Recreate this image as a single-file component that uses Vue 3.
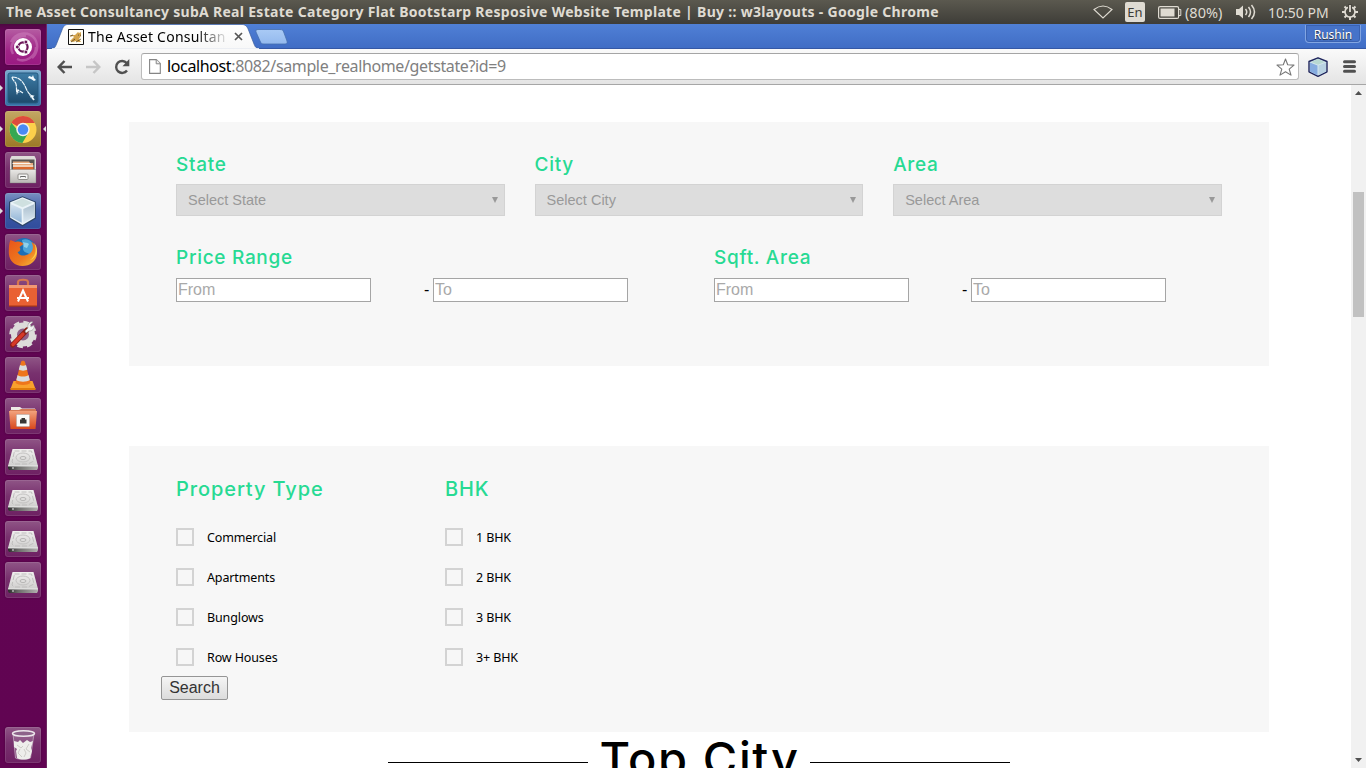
<script setup>
import { ref } from 'vue'

const launcher = [
  { icon: 'ubuntu', tint: 'magenta' },
  { icon: 'mysql', tint: 'blue', left: true },
  { icon: 'chrome', tint: 'gold', left: true, right: true },
  { icon: 'files', tint: 'plain' },
  { icon: 'cube', tint: 'royal', left: true },
  { icon: 'firefox', tint: 'plain' },
  { icon: 'software', tint: 'plain' },
  { icon: 'settings', tint: 'plain' },
  { icon: 'vlc', tint: 'plain' },
  { icon: 'network', tint: 'plain' },
  { icon: 'disk', tint: 'plain' },
  { icon: 'disk', tint: 'plain' },
  { icon: 'disk', tint: 'plain' },
  { icon: 'disk', tint: 'plain' }
]
const places = ref([
  { label: 'State', prompt: 'Select State' },
  { label: 'City', prompt: 'Select City' },
  { label: 'Area', prompt: 'Select Area' }
])
const ranges = [
  { label: 'Price Range', key: 'price' },
  { label: 'Sqft. Area', key: 'sqft' }
]
const filters = [
  { label: 'Property Type', key: 'type', options: ['Commercial', 'Apartments', 'Bunglows', 'Row Houses'] },
  { label: 'BHK', key: 'bhk', options: ['1 BHK', '2 BHK', '3 BHK', '3+ BHK'] }
]
</script>

<template>
  <div class="desktop">
    <svg class="defs" width="0" height="0">
      <defs>
        <linearGradient id="gSea" x1="0" y1="0" x2="0" y2="1"><stop offset="0" stop-color="#3d7ca6" /><stop offset="1" stop-color="#1d4a6c" /></linearGradient>
        <linearGradient id="gMetal" x1="0" y1="0" x2="0" y2="1"><stop offset="0" stop-color="#e9e8e6" /><stop offset="1" stop-color="#b9b7b4" /></linearGradient>
        <linearGradient id="gPlate" x1="0" y1="0" x2="0" y2="1"><stop offset="0" stop-color="#f1f0ef" /><stop offset="1" stop-color="#cfcecd" /></linearGradient>
        <linearGradient id="gRim" x1="0" y1="0" x2="1" y2="0"><stop offset="0" stop-color="#2b2b2b" /><stop offset=".35" stop-color="#6d6d6b" /><stop offset="1" stop-color="#b2b1af" /></linearGradient>
        <linearGradient id="gOrange" x1="0" y1="0" x2="0" y2="1"><stop offset="0" stop-color="#f3a27c" /><stop offset="1" stop-color="#d8481c" /></linearGradient>
        <linearGradient id="gFox" x1="0" y1="0" x2="1" y2="1"><stop offset="0" stop-color="#e8541a" /><stop offset=".6" stop-color="#ee7a1e" /><stop offset="1" stop-color="#f7c13c" /></linearGradient>
        <linearGradient id="gCubeL" x1="0" y1="0" x2="0" y2="1"><stop offset="0" stop-color="#d4e2ee" /><stop offset="1" stop-color="#8fb3d6" /></linearGradient>
        <linearGradient id="gCubeR" x1="0" y1="0" x2="0" y2="1"><stop offset="0" stop-color="#a9bdcc" /><stop offset="1" stop-color="#dce9f2" /></linearGradient>
        <linearGradient id="gTab" x1="0" y1="0" x2="0" y2="1"><stop offset="0" stop-color="#ffffff" /><stop offset="1" stop-color="#f8f8f8" /></linearGradient>
        <linearGradient id="gNew" x1="0" y1="0" x2="0" y2="1"><stop offset="0" stop-color="#a9caf5" /><stop offset="1" stop-color="#93b9ee" /></linearGradient>

        <symbol id="ubuntu" viewBox="0 0 36 36">
          <path d="M6 13c4-9 17-12 24-3 4 7 2 15-3 19M8 25c-5-9 3-19 13-18M12 30c8 4 19-2 19-12" fill="none" stroke="#d58bc6" stroke-width="2.5" opacity=".45" />
          <circle cx="18" cy="18" r="9" fill="#fff" />
          <circle cx="18" cy="18" r="4.6" fill="none" stroke="#6b1659" stroke-width="2.2" />
          <path d="M18 18h-6M18 18l3.500 6M18 18l3.500-6" stroke="#fff" stroke-width=".9" />
          <circle cx="18" cy="18" r="3" fill="#fff" />
          <g fill="#6b1659" stroke="#fff" stroke-width=".8"><circle cx="12.300" cy="18" r="1.900" /><circle cx="20.900" cy="13" r="1.900" /><circle cx="20.900" cy="23" r="1.900" /></g>
        </symbol>
        <symbol id="mysql" viewBox="0 0 36 36">
          <rect x="3" y="3" width="30" height="30" rx="2" fill="url(#gSea)" stroke="#265a80" />
          <path d="M7 7c6 0 10 3 13 9 2 5 4 9 8 10l-2 1 3 3M7 7c0 3 3 4 4 7 1 4 0 6 1 9l1-3 5 3" fill="none" stroke="#eef7fb" stroke-width="1.200" stroke-dasharray="5 .6" />
          <path d="m24 25 5 1-1 1 2 3-4-3zM11 20l4 3-3-1zM24 6l3 1 1-2 1 3 2 2-2 1-3-2-3-1z" fill="#f4fbff" />
        </symbol>
        <symbol id="chrome" viewBox="0 0 36 36">
          <circle cx="18" cy="18.500" r="13.500" fill="#fcd04b" />
          <path d="M18 18.500 6.300 11.800A13.500 13.500 0 0 1 29.800 12H18z" fill="#dd4b3e" />
          <path d="M18 18.500h-6L6.300 11.800A13.500 13.500 0 0 0 17.400 32l5.800-10z" fill="#35a853" />
          <circle cx="18" cy="18.500" r="6.700" fill="#f1f1f1" />
          <circle cx="18" cy="18.500" r="5.200" fill="#4a8af4" />
        </symbol>
        <symbol id="files" viewBox="0 0 36 36">
          <path d="M6.500 4h23L31 7v12H5V7z" fill="#dedcda" />
          <path d="M6.500 7.500h23V19h-23z" fill="#575451" />
          <path d="M8 9.500h16l1 1.500h3v8H8z" fill="#e6aa7e" />
          <path d="M7.500 11.500h18M8 14h20.500" stroke="#f9f6ef" stroke-width="1" />
          <path d="M8 15h20.500v3H8z" fill="#d9692d" />
          <path d="M5 17.500h26V31H5z" fill="url(#gMetal)" stroke="#777" stroke-width=".4" />
          <rect x="13" y="22" width="10" height="5.500" rx="1" fill="#f5f5f4" stroke="#8f8d8a" /><path d="M15.500 25.500v-1h5v1" fill="none" stroke="#666" />
        </symbol>
        <symbol id="cube" viewBox="0 0 36 36">
          <path d="m17.500 3.200 13.500 5.500v16.800l-13.500 8-13.500-8V8.700z" fill="#2c4568" />
          <path d="m17.500 4.200 12.300 5v15.500l-12.300 7.300-12.300-7.300V9.200z" fill="#eaf3f8" />
          <path d="m17.500 5.500 10 4.200-10 4.500-10-4.500z" fill="#cfe0e0" />
          <path d="m6 11.200 10.700 4.800v13.800L6 24z" fill="url(#gCubeL)" />
          <path d="m29 11.200-10.700 4.800v13.800L29 24z" fill="url(#gCubeR)" />
        </symbol>
        <symbol id="firefox" viewBox="0 0 36 36">
          <circle cx="19" cy="16.500" r="12.500" fill="#1d6fb5" />
          <path d="M17 6c4-2 9 0 11 4 2 5 0 9-3 11-2-3-8-2-7-8z" fill="#4da4d6" />
          <path d="M18 8c2 1 4 0 6 2l-2 4-3-1z" fill="#8fd0ea" />
          <path d="M5.500 6c1.500 1 3 1 5 2 4-1 6 0 8 2l-4 3c2 3 0 5-2 5 2 5 9 4 13 1 3-3 3-7 1-11 4 2 5.500 6 5.500 11C32 27 25 32 17.500 32 9 32 3.800 26 3.800 18.500 3.800 13 4 9 5.500 6z" fill="url(#gFox)" />
          <path d="M29 9c3 6 2 13-4 17 4-1 6.500-4 7-8 .3-4-1-7-3-9z" fill="#f9cf4a" />
        </symbol>
        <symbol id="software" viewBox="0 0 36 36">
          <path d="M13 12V7c0-3 10-3 10 0v5" fill="none" stroke="#d6764f" stroke-width="2.200" />
          <path d="M4 10h28v21H4z" fill="#e96133" /><path d="M4 10h28v3H4z" fill="#f19873" /><path d="M4 30.500h28v1.200H4z" fill="#a63715" />
          <path d="M13 26.500 18 15.500l5 11M12 23h12" fill="none" stroke="#fff" stroke-width="2" />
        </symbol>
        <symbol id="settings" viewBox="0 0 36 36">
          <circle cx="18" cy="18.500" r="9" fill="#8f6088" stroke="#dddcda" stroke-width="6" />
          <circle cx="18" cy="18.500" r="12" fill="none" stroke="#dddcda" stroke-width="3.500" stroke-dasharray="5.400 4.025" />
          <path d="M7.500 29 22 14" stroke="#8d1f15" stroke-width="5" stroke-linecap="round" />
          <path d="M8 28.500 18 18" stroke="#d63928" stroke-width="3.300" stroke-linecap="round" />
          <path d="m20 15 3-3c-1-4 2-7 5-6l-3 3 1 2 3-2c1 4-2 6-5 6l-3 2z" fill="#f2f2f2" stroke="#888" stroke-width=".5" />
        </symbol>
        <symbol id="vlc" viewBox="0 0 36 36">
          <path d="M8.500 24h19l3 8h-25z" fill="#f9a12d" /><path d="M5.500 31h25v2h-25z" fill="#e07c0c" />
          <path d="M16 5c.5-1.800 3.500-1.800 4 0l5.500 21c-3 2.500-12 2.500-15 0z" fill="#ee761c" />
          <path d="m15 8-1.200 4.500c2 1.500 6.500 1.500 8.500 0L21 8c-1.500 1-4.500 1-6 0zM12.600 18l-1.300 5c3 2.300 10.500 2.300 13.500 0l-1.300-5c-2.500 2-8.500 2-10.900 0z" fill="#d8dcdf" />
        </symbol>
        <symbol id="network" viewBox="0 0 36 36">
          <path d="M6 9h9l2 1.500h13V17H6z" fill="#eeeae6" /><path d="M5 12h9l2-1h15v4H5z" fill="#d47a55" />
          <path d="M4 13h28l-1.500 18h-25z" fill="url(#gOrange)" />
          <rect x="11.500" y="16.500" width="13" height="12" rx=".7" fill="#fafaf8" stroke="#aaa" stroke-width=".5" />
          <path d="M15 25.500v-4h1.500V20h3.500v1.500h1.500v4z" fill="#373634" />
        </symbol>
        <symbol id="disk" viewBox="0 0 36 36">
          <path d="M7.500 10h21L33 27H3z" fill="url(#gPlate)" />
          <path d="M9.500 12h17l2.500 10-6 3H9l-2-2z" fill="none" stroke="#bfbebd" stroke-width="1" stroke-dasharray="5 2" />
          <ellipse cx="18" cy="18.500" rx="7" ry="4.500" fill="none" stroke="#c3c2c1" /><ellipse cx="18" cy="19" rx="3" ry="1.500" fill="#e2e1e0" stroke="#b5b4b3" />
          <path d="M3 27h30v2l-1 2H4l-1-2z" fill="url(#gRim)" /><path d="M3 27h30" stroke="#f4f4f4" stroke-width=".8" /><path d="M7 28h2v2H7z" fill="#999" />
        </symbol>
        <symbol id="trash" viewBox="0 0 36 36">
          <path d="M8 6.500 10.500 31c2 1.500 13 1.500 15 0L29 6.500" fill="#c8b8c8" fill-opacity=".25" stroke="#cbb9c9" stroke-width=".7" />
          <ellipse cx="18.500" cy="6.500" rx="11" ry="2.800" fill="#8d638a" stroke="#ece6eb" stroke-width="1.500" />
          <path d="m9 14 4 1 2-2 3 3 4-3 3 2 3-1-2 7 1 3-2 7c-3 2-10 2-13 0l-1-7 1-2-3-2z" fill="#eeedeb" />
          <path d="m12 18 4 3 2-2m6-2-3 5 4 3m-10-3-2 4 4 4m2-8 2 4-2 4" fill="none" stroke="#c4c1be" stroke-width=".8" />
        </symbol>
      </defs>
    </svg>

    <header class="menubar">
      <span class="title">The Asset Consultancy subA Real Estate Category Flat Bootstarp Resposive Website Template | Buy :: w3layouts - Google Chrome</span>
      <div class="tray">
        <svg class="wifi" width="20" height="14" viewBox="0 0 20 14"><path d="M1 4.500Q10-2.500 19 4.500L10 13z" fill="none" stroke="#dfdbd2" stroke-width="1.100" /></svg>
        <span class="lang">En</span>
        <svg class="battery" width="24" height="13" viewBox="0 0 24 13"><rect x=".6" y=".6" width="20" height="11.800" rx="1.500" fill="none" stroke="#dfdbd2" stroke-width="1.200" /><path d="M2.500 2.500h14v8h-14z" fill="#dfdbd2" /><path d="M21 3.500h1.800v6H21" fill="none" stroke="#dfdbd2" /></svg>
        <span class="percent">(80%)</span>
        <svg class="sound" width="21" height="16" viewBox="0 0 21 16"><path d="M1 5h3l4-3.500v13L4 11H1z" fill="#dfdbd2" /><path d="M10.500 5q2.500 3 0 6M13.500 3q4 5 0 10M16.500 1q6 7 0 14" fill="none" stroke="#dfdbd2" stroke-width="1.500" /></svg>
        <span class="clock">10:50 PM</span>
        <svg class="gear" width="16" height="16" viewBox="0 0 16 16"><circle cx="8" cy="8" r="5" fill="none" stroke="#dfdbd2" stroke-width="1.700" /><path d="M8 13v3M3 8H0M13 8h3M4.500 4.500l-2-2M11.500 4.500l2-2M4.500 11.500l-2 2M11.500 11.500l2 2" stroke="#dfdbd2" stroke-width="2" /><path d="M8 0v8" stroke="#48463f" stroke-width="4" /><path d="M8 1v7" stroke="#dfdbd2" stroke-width="1.800" /></svg>
      </div>
    </header>

    <div class="workspace">
      <nav class="launcher">
        <div v-for="(app, i) in launcher" :key="i" class="tile" :class="app.tint">
          <svg width="36" height="36"><use :href="'#' + app.icon" /></svg>
          <i v-if="app.left" class="pip left"></i>
          <i v-if="app.right" class="pip right"></i>
        </div>
        <div class="tile plain bin"><svg width="36" height="36"><use href="#trash" /></svg></div>
      </nav>

      <section class="browser">
        <div class="tabstrip">
          <div class="tab">
            <svg class="tabshape" width="214" height="25" viewBox="0 0 214 25"><path d="M0 25c5 0 6-1 7.500-5l5.500-14C14.500 2 16 .5 19 .5h174c3 0 5 1.500 6.500 5.500l5.500 14c1.500 4 3 5 8 5z" fill="url(#gTab)" stroke="#3a5c9c" stroke-width=".7" /><path d="M3 24.700h207" stroke="#f9f9f9" stroke-width="1" /></svg>
            <svg class="favicon" width="16" height="16" viewBox="0 0 16 16"><path d="M.5.500h15v15H.5z" fill="#fffdf5" stroke="#111" /><path d="m2 12 4-4-1-1-3 1 2-2h3l3-3 1 1 2-1v4l-2 3 2 3h-3l-2-1-3 1z" fill="#d3a34b" /><path d="m2 7 3-1m-2 7 4-3m1 3 5-3m-3-4 1 .2m1 0h1" stroke="#594321" stroke-width=".8" /></svg>
            <span class="tabtext">The Asset Consultan</span>
            <svg class="close" width="9" height="9" viewBox="0 0 9 9"><path d="m1 1 7 7M8 1 1 8" stroke="#555" stroke-width="1.700" /></svg>
          </div>
          <svg class="newtab" width="33" height="16" viewBox="0 0 33 16"><path d="M3 .5h22c2 0 3 .5 3.700 2.500L32 12c.5 2 0 3-2 3H9c-2 0-3-.5-4-3L1 3C.5 1.500 1 .5 3 .5z" fill="url(#gNew)" stroke="#456fae" stroke-width=".8" /></svg>
          <button class="profile">Rushin</button>
        </div>

        <div class="toolbar">
          <svg class="back" width="15" height="14" viewBox="0 0 15 14"><path d="M15 7H2M7.500 1 1.700 7l5.800 6" fill="none" stroke="#505050" stroke-width="2.500" /></svg>
          <svg class="fwd" width="15" height="14" viewBox="0 0 15 14"><path d="M0 7h13M7.500 1l5.800 6-5.800 6" fill="none" stroke="#c6c6c6" stroke-width="2.500" /></svg>
          <svg class="reload" width="16" height="16" viewBox="0 0 16 16"><path d="M13 11.500A6 6 0 1 1 12.700 4" fill="none" stroke="#505050" stroke-width="2.400" /><path d="M15.300 0v7.200H8.500z" fill="#505050" /></svg>
          <div class="omnibox">
            <svg width="12" height="15" viewBox="0 0 12 15"><path d="M.6.600h6.700l4 4v9.800H.600z" fill="#fff" stroke="#858585" stroke-width="1.100" /><path d="M7.200.600v4.200h4.100" fill="#eee" stroke="#858585" /></svg>
            <span class="url"><b>localhost</b>:8082/sample_realhome/getstate?id=9</span>
            <svg class="star" width="19" height="18" viewBox="0 0 19 18"><path d="m9.500 1 2.200 5.700 6.300.4-4.800 4 1.800 6-5.500-3.400L4 17.100l1.800-6L1 7.100l6.300-.4z" fill="#fff" stroke="#777" stroke-width="1.100" stroke-linejoin="round" /></svg>
          </div>
          <svg class="ext" width="20" height="20" viewBox="0 0 20 20"><path d="m10 .8 9 3.700v10.300L10 19.300 1 14.800V4.500z" fill="#d5e6ee" stroke="#20265d" stroke-width="1.400" stroke-linejoin="round" /><path d="m2 5.500 7.500 3v9.800L2 14.400z" fill="#86ace0" /><path d="m18 5.500-7.500 3v9.800l7.500-3.900z" fill="#b9d2e2" /><path d="m10 2 7 3-7 2.700L3 5z" fill="#b8d8d2" /></svg>
          <svg class="menu" width="13" height="13" viewBox="0 0 13 13"><path d="M1.500 1.700h10M1.500 6.500h10M1.500 11.300h10" stroke="#505050" stroke-width="3" stroke-linecap="round" /></svg>
        </div>

        <div class="viewport">
          <main class="page">
            <form class="panel search" @submit.prevent>
              <div class="places">
                <div v-for="p in places" :key="p.label">
                  <h4>{{ p.label }}</h4>
                  <div class="select"><span>{{ p.prompt }}</span><svg width="6" height="6" viewBox="0 0 6 6"><path d="M0 0h6L3 6z" fill="#999" /></svg></div>
                </div>
              </div>
              <div class="ranges">
                <div v-for="r in ranges" :key="r.key">
                  <h4 :class="r.key">{{ r.label }}</h4>
                  <div class="pair">
                    <input type="text" placeholder="From"><span class="dash">-</span><input type="text" placeholder="To">
                  </div>
                </div>
              </div>
            </form>

            <form class="panel props" @submit.prevent>
              <div class="groups">
                <div v-for="g in filters" :key="g.key">
                  <h3 :class="g.key">{{ g.label }}</h3>
                  <label v-for="o in g.options" :key="o" :class="g.key"><i class="box"></i><span>{{ o }}</span></label>
                </div>
              </div>
              <button class="submit">Search</button>
            </form>

            <div class="heading"><i></i><h2>Top City</h2><i></i></div>
          </main>
          <aside class="scroll">
            <svg class="up" width="7" height="4" viewBox="0 0 7 4"><path d="M3.500 0 7 4H0z" fill="#505050" /></svg>
            <div class="thumb"></div>
            <svg class="down" width="7" height="4" viewBox="0 0 7 4"><path d="M0 0h7L3.500 4z" fill="#505050" /></svg>
          </aside>
        </div>
      </section>
    </div>
  </div>
</template>

<style>
html, body { margin: 0; overflow: hidden; }
</style>

<style scoped>
* { box-sizing: border-box; }
svg { display: block; flex: none; }
.defs { position: absolute; }
.desktop { width: 1366px; height: 768px; overflow: hidden; display: flex; flex-direction: column; font-family: "Noto Sans", sans-serif; background: #fff; }

.menubar { height: 24px; flex: none; display: flex; align-items: center; justify-content: space-between; padding: 0 8px 0 6px; background: linear-gradient(#5b594f, #3e3d38); color: #dfdbd2; white-space: nowrap; }
.title { font-size: 14px; font-weight: 700; letter-spacing: .3px; line-height: 24px; }
.tray { display: flex; align-items: center; font-size: 14px; }
.lang { width: 20px; height: 20px; margin-left: 12px; border-radius: 2px; background: #dfdbd2; color: #3c3b37; text-align: center; line-height: 20px; font-size: 13px; }
.battery { margin-left: 13px; }
.percent { margin-left: 3px; width: 38px; font-size: 14.5px; }
.sound { margin-left: 12px; }
.clock { margin-left: 12px; width: 61px; font-size: 14px; }
.gear { margin-left: 13px; }

.workspace { flex: 1; min-height: 0; display: flex; }
.launcher { width: 47px; flex: none; display: flex; flex-direction: column; gap: 5px; padding: 5px 0 5px 5px; background: linear-gradient(#4d0840 0, #610553 5px, #610452 100%); border-right: 1px solid #6d2a61; }
.tile { position: relative; width: 36px; height: 36px; border-radius: 3px; box-shadow: inset 0 0 0 1px rgba(255, 255, 255, .1), 0 0 2px rgba(30, 0, 25, .4); }
.plain { background: linear-gradient(#8f5586, #78316e 45%, #6e2163); }
.magenta { background: linear-gradient(#b55ca2, #a02587 60%, #9a1a82); }
.blue { background: linear-gradient(#78a8cc, #3470a5); }
.gold { background: linear-gradient(#c3a764, #9c7926); }
.royal { background: linear-gradient(#7a90c1, #3b58a4 50%, #304d9c); }
.bin { margin-top: auto; }
.pip { position: absolute; top: 15px; border: 3px solid transparent; border-width: 3.5px 3px; }
.pip.left { left: -5px; border-left-color: #ddd; border-right: 0; }
.pip.right { right: -5px; border-right-color: #ddd; border-left: 0; }

.browser { flex: 1; min-width: 0; display: flex; flex-direction: column; }
.tabstrip { height: 25px; flex: none; display: flex; align-items: flex-start; background: linear-gradient(#5080d6, #406dc5); border-bottom: 1px solid #3558a5; }
.tab { position: relative; width: 203px; height: 25px; margin-left: 3px; flex: none; display: flex; align-items: center; padding-left: 18px; }
.tabshape { position: absolute; left: -1px; top: 0; }
.favicon, .tabtext, .close { position: relative; }
.tabtext { margin-left: 4px; width: 140px; overflow: hidden; white-space: nowrap; font-size: 14px; letter-spacing: .22px; line-height: 24px; color: #000; -webkit-mask-image: linear-gradient(90deg, #000 108px, transparent 141px); mask-image: linear-gradient(90deg, #000 108px, transparent 141px); }
.close { margin-left: 6px; }
.newtab { margin: 5px 0 0 2px; }
.profile { margin: 1px 5px 0 auto; width: 56px; height: 18px; padding: 0; border: 1px solid #82a5e2; border-top: 0; border-radius: 0 0 4px 4px; background: #4673c9; box-shadow: inset 0 0 0 1px #3a62b2; color: #fff; font: 12px/20px "Noto Sans", sans-serif; text-shadow: 0 1px 1px #222; }

.toolbar { height: 36px; flex: none; display: flex; align-items: center; padding: 0 10px; background: linear-gradient(#fafafa, #e4e4e4); border-bottom: 1px solid #a6a6a6; }
.fwd { margin-left: 14px; }
.reload { margin-left: 13px; }
.omnibox { width: 1158px; height: 27px; margin-left: 11px; flex: none; display: flex; align-items: center; padding: 0 3px 0 7px; border: 1px solid #bcbcbc; border-top-color: #a5a5a5; border-radius: 3px; background: #fff; }
.url { margin-left: 6px; font-size: 16px; line-height: 25px; color: #808080; white-space: nowrap; letter-spacing: -.37px; }
.url b { font-weight: 400; color: #000; }
.star { margin-left: auto; }
.ext { margin-left: 9px; }
.menu { margin-left: 15px; }

.viewport { flex: 1; min-height: 0; display: flex; }
.page { width: 1304px; flex: none; overflow: hidden; padding: 37px 82px 0; height: 683px; }
.panel { width: 1140px; background: #f7f7f7; }
h2, h3, h4 { margin: 0; font-family: Inter, sans-serif; font-weight: 500; white-space: nowrap; }
h4 { color: #27da93; font-size: 19px; line-height: 24px; letter-spacing: .7px; }
h3 { color: #27da93; font-size: 20px; line-height: 26px; letter-spacing: .9px; }
.search { height: 244px; padding: 31px 47px 0; }
.places { display: grid; grid-template-columns: repeat(3, 328.6px); column-gap: 30px; }
.select { height: 32px; margin-top: 7px; padding: 0 6px 0 11px; display: flex; align-items: center; justify-content: space-between; background: #ddd; border: 1px solid #d3d3d3; color: #999; font: 14.5px "Liberation Sans", sans-serif; }
.ranges { display: grid; grid-template-columns: 538px 538px; margin-top: 30px; }
.pair { display: flex; align-items: center; margin-top: 8px; }
.pair input { width: 195px; height: 24px; padding: 0 1px; border: 1px solid #a5a5a5; border-radius: 0; background: #fff; font: 16px "Liberation Sans", sans-serif; }
.pair input::placeholder { color: #a9a9a9; opacity: 1; }
.dash { width: 62px; padding-left: 53px; font: 16px "Liberation Sans", sans-serif; color: #000; }

.props { height: 286px; margin-top: 80px; padding: 30px 32px 0; }
.groups { display: grid; grid-template-columns: 269px 269px; padding-left: 15px; }
.groups h3 { margin-bottom: 15px; }
.groups label { display: flex; align-items: center; height: 40px; font-size: 12.5px; letter-spacing: -.12px; color: #000; }
.box { width: 18px; height: 18px; margin-right: 13px; border: 2px solid #d3d3d3; }
.submit { display: block; width: 67px; height: 24px; margin-top: -1px; padding: 0; border: 1px solid #959595; border-radius: 2px; background: linear-gradient(#f5f5f5, #dcdcdc); color: #333; font: 16px/20px "Liberation Sans", sans-serif; }
.heading { display: flex; align-items: flex-start; justify-content: center; }
.heading i { width: 200px; height: 1px; margin-top: 30px; background: #000; }
.heading h2 { width: 222px; text-align: center; font-size: 47px; line-height: 54px; letter-spacing: 1.6px; text-indent: 1px; color: #000; }

.scroll { width: 15px; flex: none; display: flex; flex-direction: column; align-items: center; background: #f1f1f1; }
.up { margin-top: 6px; }
.thumb { width: 11px; height: 125px; margin-top: 97px; background: #c1c1c1; }
.down { margin: auto 0 6px; }
</style>
